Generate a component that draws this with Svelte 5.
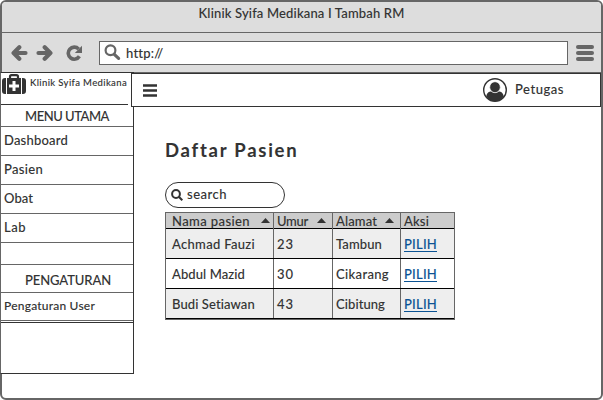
<script>
  const menu = [
    { label: 'Dashboard', width: 64 },
    { label: 'Pasien', width: 39 },
    { label: 'Obat', width: 29 },
    { label: 'Lab', width: 22 },
  ];
  const columns = [
    { label: 'Nama pasien', width: 78, sortable: true },
    { label: 'Umur', width: 31, sortable: true },
    { label: 'Alamat', width: 41, sortable: true },
    { label: 'Aksi', width: 25, sortable: false },
  ];
  const patients = [
    { name: 'Achmad Fauzi', nameW: 83, age: '23', city: 'Tambun', cityW: 46 },
    { name: 'Abdul Mazid', nameW: 73, age: '30', city: 'Cikarang', cityW: 53 },
    { name: 'Budi Setiawan', nameW: 83, age: '43', city: 'Cibitung', cityW: 49 },
  ];

  // Spreads the letters of a label evenly over the given width.
  function fit(node, width) {
    const natural = node.getBoundingClientRect().width;
    node.style.letterSpacing = `${(width - natural) / node.textContent.length}px`;
  }
</script>

<div class="window">
  <header class="titlebar"><span use:fit={206}>Klinik Syifa Medikana I Tambah RM</span></header>
  <div class="toolbar">
    <svg class="nav" width="17" height="16" viewBox="0 0 17 16"><path d="M8.300 2.300 2.600 8l5.700 5.700M3.500 8H14.500" /></svg>
    <svg class="nav second" width="17" height="16" viewBox="0 0 17 16"><path d="M8.700 2.300 14.400 8l-5.700 5.700M13.500 8H2.500" /></svg>
    <svg class="reload" width="17" height="16" viewBox="0 0 17 16">
      <path d="M12.600 4A6 6 0 1 0 13.400 11.300" fill="none" stroke="#666" stroke-width="3.600" />
      <path d="M16 .8v7.200H8.800z" fill="#666" />
    </svg>
    <div class="address">
      <svg width="17" height="17" viewBox="0 0 17 17" fill="none" stroke="#666">
        <circle cx="6.500" cy="6.300" r="4.900" stroke-width="2.200" />
        <path d="m10.300 10.300 4.300 4" stroke-width="3.200" stroke-linecap="round" />
      </svg>
      <span use:fit={37}>http://</span>
    </div>
    <div class="bars"><i></i><i></i><i></i></div>
  </div>

  <div class="page">
    <aside>
      <div class="brand">
        <svg width="24" height="21" viewBox="0 0 24 21">
          <path d="M8 5V2.800Q8 1.200 9.500 1.200h5Q16 1.200 16 2.800V5" fill="none" stroke="#333" stroke-width="2.200" />
          <path d="M3 4h1v16H3Q0 20 0 17V7Q0 4 3 4M5 4h14v16h-14zM20 4h1q3 0 3 3v10q0 3-3 3h-1z" fill="#333" />
          <path d="M10.500 7h3V10.500H17v3h-3.500v3.500h-3V13.500H7v-3h3.500z" fill="#fff" />
        </svg>
        <span use:fit={97}>Klinik Syifa Medikana</span>
      </div>
      <div class="section first"><span use:fit={84}>MENU UTAMA</span></div>
      {#each menu as item}
        <div class="item"><span use:fit={item.width}>{item.label}</span></div>
      {/each}
      <div class="gap"></div>
      <div class="section"><span use:fit={86}>PENGATURAN</span></div>
      <div class="item small"><span use:fit={91}>Pengaturan User</span></div>
      <div class="rule"></div>
    </aside>

    <main>
      <nav>
        <svg width="14" height="13" viewBox="0 0 14 13"><path d="M0 1.500h14M0 6.500h14M0 11.500h14" stroke="#333" stroke-width="2.400" /></svg>
        <div class="user">
          <svg width="24" height="24" viewBox="0 0 24 24">
            <circle cx="12" cy="12" r="11.300" fill="#fff" stroke="#333" stroke-width="1.400" />
            <path d="M3.200 18.500C4 14.500 6 13.600 8.300 13.500q3.700 2.600 7.400 0c2.300.1 4.300 1 5.100 5C18.500 22 15.500 23.300 12 23.300S5.500 22 3.200 18.500z" fill="#333" />
            <ellipse cx="12" cy="9.200" rx="5.300" ry="5.500" fill="#333" stroke="#fff" stroke-width=".7" />
          </svg>
          <span use:fit={49}>Petugas</span>
        </div>
      </nav>
      <div class="content">
        <h1><span use:fit={133}>Daftar Pasien</span></h1>
        <div class="search">
          <svg width="12" height="12" viewBox="0 0 12 12" fill="none" stroke="#333" stroke-width="2">
            <circle cx="5" cy="5" r="3.900" /><path d="m7.800 7.800 3.500 3.500" />
          </svg>
          <span use:fit={40}>search</span>
        </div>
        <div class="table">
          <div class="row head">
            {#each columns as col}
              <div class="cell">
                <span use:fit={col.width}>{col.label}</span>
                {#if col.sortable}<svg width="9" height="5" viewBox="0 0 9 5"><path d="M4.500 0 9 5H0z" fill="#333" /></svg>{/if}
              </div>
            {/each}
          </div>
          {#each patients as p}
            <div class="row">
              <div class="cell"><span use:fit={p.nameW}>{p.name}</span></div>
              <div class="cell"><span use:fit={17}>{p.age}</span></div>
              <div class="cell"><span use:fit={p.cityW}>{p.city}</span></div>
              <div class="cell"><a href="#pilih"><span use:fit={33}>PILIH</span></a></div>
            </div>
          {/each}
        </div>
      </div>
    </main>
  </div>
</div>

<style>
  :global(body) { background: #fff; }
  .window, .window * { box-sizing: border-box; }
  .window {
    width: 603px; height: 400px; border: 2px solid #666; border-radius: 6px;
    background: #fff; color: #333;
    font: 500 13px/16px Lato, "Noto Sans", sans-serif;
    -webkit-text-stroke: .08px;
  }
  span { display: inline-block; white-space: nowrap; }
  svg { display: block; flex: none; }
  .titlebar {
    height: 31px; background: #ddd; border-bottom: 1px solid #666;
    border-radius: 4px 4px 0 0; text-align: center; padding-top: 3px;
  }
  .toolbar {
    height: 40px; background: #ddd; border-bottom: 1px solid #666;
    display: flex; align-items: center; padding: 0 7px 0 9px;
  }
  .nav { fill: none; stroke: #666; stroke-width: 4.2; stroke-linecap: round; stroke-linejoin: round; }
  .second { margin-left: 8px; }
  .reload { margin-left: 13px; }
  .address {
    width: 469px; height: 24px; margin-left: 16px; border: 1px solid #666; background: #fff;
    display: flex; align-items: center; gap: 5px; padding-left: 4px;
  }
  .bars { margin-left: 8px; display: flex; flex-direction: column; gap: 2px; }
  .bars i { display: block; width: 18px; height: 4px; border-radius: 2px; background: #666; }

  .page { display: flex; align-items: flex-start; }
  aside {
    width: 134px; height: 302px; margin: -1px 0 0 -2px; flex: none;
    border: 1px solid #333; border-left-color: #666; background: #fff;
  }
  .brand {
    width: 127px; height: 32px; border-bottom: 1px solid #333;
    display: flex; gap: 4px; padding: 1px 0 0 1px; font-size: 9.5px; line-height: 18px;
  }
  .section {
    height: 28px; border-bottom: 1px solid #666; padding: 7px 0 0 24px; font-size: 13px;
  }
  .section.first { height: 22px; padding-top: 3px; }
  .item { height: 29px; border-bottom: 1px solid #666; padding: 5px 0 0 3px; }
  .item.small { height: 28px; font-size: 12px; padding-top: 5px; }
  .gap { height: 22px; border-bottom: 1px solid #666; }
  .rule { height: 2px; border-bottom: 1px solid #333; }

  main { width: 470px; margin-left: -3px; position: relative; }
  nav {
    height: 34px; border: 1px solid #333; background: #fff;
    display: flex; align-items: center; justify-content: space-between; padding: 0 36px 0 11px;
  }
  .user { display: flex; align-items: center; gap: 8px; }
  .user span { margin-top: -2px; }
  .content { padding: 32px 0 0 34px; }
  h1 { margin: 0; font-size: 18.5px; line-height: 22px; font-weight: 700; }
  .search {
    width: 120px; height: 26px; margin-top: 21px; border: 1px solid #333; border-radius: 13px;
    display: flex; align-items: center; gap: 4px; padding-left: 5px;
  }
  .search span { margin-top: -2px; }
  .table { width: 290px; margin-top: 4px; border: 1px solid #666; }
  .row { display: grid; grid-template-columns: 108px 59px 68px 53px; height: 30px; border-bottom: 1px solid #000; }
  .row:nth-child(even) { background: #eee; }
  .row.head { height: 16px; background: #ccc; }
  .cell { border-right: 1px solid #666; padding: 7px 3px 0; }
  .cell:first-child { padding-left: 6px; }
  .cell:last-child { border-right: 0; }
  .head .cell { display: flex; justify-content: space-between; padding-top: 0; padding-right: 6px; }
  .head .cell:first-child { padding-right: 3px; }
  .head svg { margin-top: 5px; }
  a { color: #0b5394; text-decoration: none; border-bottom: 1px solid #0b5394; display: inline-block; height: 16px; }
</style>
